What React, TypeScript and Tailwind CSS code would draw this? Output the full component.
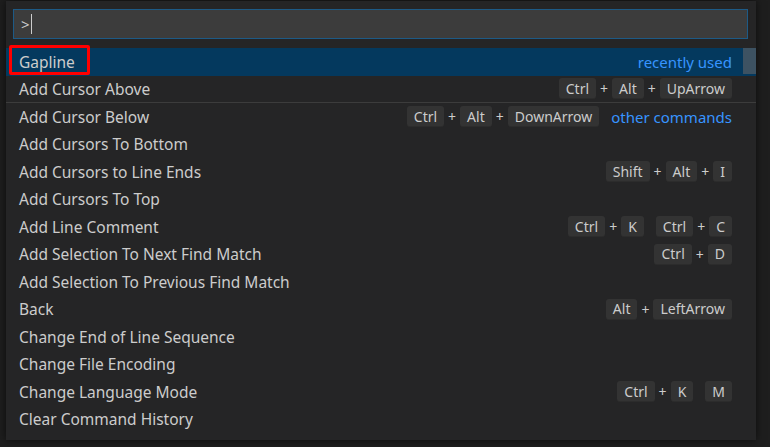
import React from "react";

type Row = {
  label: string;
  keys?: string[][];
  tag?: string;
  active?: boolean;
  divider?: boolean;
};

const rows: Row[] = [
  { label: "Gapline", tag: "recently used", active: true },
  { label: "Add Cursor Above", keys: [["Ctrl", "Alt", "UpArrow"]], divider: true },
  { label: "Add Cursor Below", keys: [["Ctrl", "Alt", "DownArrow"]], tag: "other commands" },
  { label: "Add Cursors To Bottom" },
  { label: "Add Cursors to Line Ends", keys: [["Shift", "Alt", "I"]] },
  { label: "Add Cursors To Top" },
  { label: "Add Line Comment", keys: [["Ctrl", "K"], ["Ctrl", "C"]] },
  { label: "Add Selection To Next Find Match", keys: [["Ctrl", "D"]] },
  { label: "Add Selection To Previous Find Match" },
  { label: "Back", keys: [["Alt", "LeftArrow"]] },
  { label: "Change End of Line Sequence" },
  { label: "Change File Encoding" },
  { label: "Change Language Mode", keys: [["Ctrl", "K"], ["M"]] },
  { label: "Clear Command History" },
];

function Key({ k }: { k: string }) {
  return (
    <span className="h-[21px] px-[7px] flex items-center rounded-[3px] bg-[#333333] border-b border-[#2c2c2c] text-[14px] text-[#cccccc]">
      {k}
    </span>
  );
}

function Chord({ parts }: { parts: string[] }) {
  return (
    <span className="flex items-center">
      {parts.map((p, i) => (
        <React.Fragment key={i}>
          {i > 0 && <span className="px-[4px] text-[14px] text-[#cccccc]">+</span>}
          <Key k={p} />
        </React.Fragment>
      ))}
    </span>
  );
}

export default function App() {
  return (
    <div
      className="w-[770px] h-[447px] bg-[#1e1e1e] overflow-hidden text-[#cccccc]"
      style={{ fontFamily: '"Noto Sans", "Open Sans", sans-serif' }}
    >
      <div className="ml-[6px] mt-[1px] w-[750px] h-[439px] bg-[#252526] shadow-[0_0_8px_rgba(0,0,0,0.6)] relative">
        <div className="pt-[8px] pl-[7px] pr-[8px]">
          <div className="h-[30px] bg-[#3c3c3c] border border-[#1d5a86] flex items-center pl-[7px]">
            <span className="text-[15px] text-[#cccccc]">&gt;</span>
            <span className="w-px h-[20px] bg-[#cccccc] ml-px" />
          </div>
        </div>
        <div className="mt-[9px] relative">
          {rows.map((r, i) => (
            <div
              key={i}
              className={`h-[27.5px] flex items-center pl-[13px] pr-[24px] ${
                r.active ? "bg-[#04395e]" : ""
              } ${r.divider ? "border-b border-[#3c3c3c]" : ""}`}
            >
              <span className="text-[15.5px] flex-1 whitespace-nowrap pt-px">{r.label}</span>
              {r.keys && (
                <span className="flex items-center gap-[12px]">
                  {r.keys.map((c, j) => (
                    <Chord key={j} parts={c} />
                  ))}
                </span>
              )}
              {r.tag && (
                <span className="text-[15px] text-[#3794ff] ml-[12px] pt-px">{r.tag}</span>
              )}
            </div>
          ))}
          <div className="absolute right-0 top-0 w-[13px] h-[26px] bg-[#3d5262]" />
          <div className="absolute left-[3px] top-[-3px] w-[81px] h-[30px] border-[3px] border-[#ff0000] rounded-[2px]" />
        </div>
      </div>
    </div>
  );
}
